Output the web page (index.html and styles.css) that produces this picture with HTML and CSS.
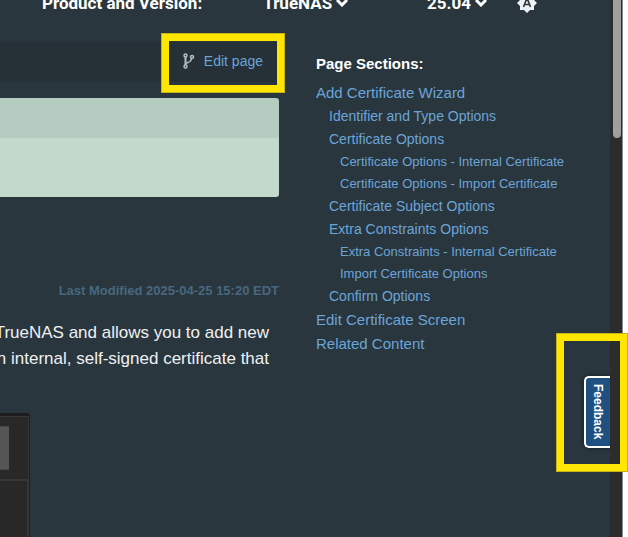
FILE: index.html
```html
<!DOCTYPE html>
<html lang="en">

<head>
  <meta charset="UTF-8">
  <meta name="viewport" content="width=device-width, initial-scale=1.0">
  <title>Certificates</title>
  <link rel="stylesheet" href="styles.css">
</head>

<body>
  <div class="page">
    <header class="topbar">
      <span class="label">Product and Version:</span>
      <button type="button" class="picker product">TrueNAS
        <svg class="chevron" viewBox="0 0 12 8"><path d="M1 1l5 5 5-5" /></svg>
      </button>
      <button type="button" class="picker version">25.04
        <svg class="chevron" viewBox="0 0 12 8"><path d="M1 1l5 5 5-5" /></svg>
      </button>
      <button type="button" class="theme" aria-label="Theme">
        <svg viewBox="0 0 20 20">
          <path fill="#eef1f5" d="M10 0l3 3h4v4l3 3-3 3v4h-4l-3 3-3-3H3v-4l-3-3 3-3V3h4z" />
          <path fill="none" stroke="#2a363e" stroke-width="1.600" d="M6.500 14L10 5l3.500 9M8 11.500h4" />
        </svg>
      </button>
    </header>
    <div class="columns">
      <main class="content">
        <div class="crumbs">
          <a href="#" class="edit">
            <svg class="branch" viewBox="0 0 12 16">
              <path class="stem" d="M2.500 4v8" />
              <path d="M2.500 11c1-2.500 5.500-.500 6-5.500" />
              <circle cx="2.500" cy="2.500" r="1.500" />
              <circle cx="9" cy="4" r="1.500" />
              <circle cx="2.500" cy="13.500" r="1.500" />
            </svg>
            Edit page
          </a>
          <div class="mark mark-edit"></div>
        </div>
        <div class="banner">
          <div class="banner-head"></div>
          <div class="banner-body"></div>
        </div>
        <p class="modified">Last Modified 2025-04-25 15:20 EDT</p>
        <p class="intro">TrueNAS and allows you to add new<br>n internal, self-signed certificate that</p>
        <div class="shot">
          <div class="shot-head">
            <div class="shot-btn"></div>
          </div>
          <div class="shot-body"></div>
        </div>
      </main>
      <nav class="toc">
        <h2>Page Sections:</h2>
        <ul>
          <li><a href="#">Add Certificate Wizard</a>
            <ul>
              <li><a href="#">Identifier and Type Options</a></li>
              <li><a href="#">Certificate Options</a>
                <ul>
                  <li><a href="#">Certificate Options - Internal Certificate</a></li>
                  <li><a href="#">Certificate Options - Import Certificate</a></li>
                </ul>
              </li>
              <li><a href="#">Certificate Subject Options</a></li>
              <li><a href="#">Extra Constraints Options</a>
                <ul>
                  <li><a href="#">Extra Constraints - Internal Certificate</a></li>
                  <li><a href="#">Import Certificate Options</a></li>
                </ul>
              </li>
              <li><a href="#">Confirm Options</a></li>
            </ul>
          </li>
          <li><a href="#">Edit Certificate Screen</a></li>
          <li><a href="#">Related Content</a></li>
        </ul>
      </nav>
    </div>
    <button type="button" class="feedback">Feedback</button>
  </div>
  <div class="scrollbar">
    <div class="thumb"></div>
  </div>
  <div class="mark mark-feedback"></div>
</body>

</html>
```
FILE: styles.css
```css
* {
  margin: 0;
  padding: 0;
  box-sizing: border-box;
}

body {
  display: flex;
  position: relative;
  height: 100vh;
  padding-right: 5px;
  overflow: hidden;
  background: #fff;
  font-family: "Liberation Sans", Arial, sans-serif;
  color: #fff;
}

a {
  color: #6aa5d8;
  text-decoration: none;
}

ul {
  list-style: none;
}

button {
  border: 0;
  background: none;
  color: inherit;
  font: inherit;
  cursor: pointer;
}

.page {
  flex: 1;
  position: relative;
  overflow: hidden;
  background: #2a363e;
}

/* top bar, scrolled half out of view */
.topbar {
  display: flex;
  align-items: center;
  height: 24px;
  margin-top: -9px;
  padding-left: 42px;
  font: bold 17px/24px Roboto, sans-serif;
  white-space: nowrap;
}

.picker {
  display: flex;
  align-items: center;
  gap: 4px;
}

.product {
  margin-left: 61px;
}

.version {
  margin-left: 79px;
}

.chevron {
  width: 12px;
  height: 8px;
  fill: none;
  stroke: #fff;
  stroke-width: 3;
}

.theme {
  margin-left: 30px;
  height: 20px;
}

.theme svg {
  display: block;
  width: 20px;
  height: 20px;
}

.columns {
  display: flex;
  gap: 37px;
  padding-top: 27px;
}

.content {
  flex: 0 1 279px;
}

.crumbs {
  position: relative;
  display: flex;
  justify-content: flex-end;
  height: 40px;
  padding-right: 16px;
  background: #253037;
}

.edit {
  display: flex;
  align-items: center;
  gap: 9px;
  height: 38px;
  font-size: 14px;
}

.branch {
  width: 12px;
  height: 16px;
  fill: none;
  stroke: #b4bcc4;
  stroke-width: 1.5;
}

.stem {
  stroke-width: 2;
}

.mark {
  position: absolute;
  border: 8px solid #ffe600;
  outline: 1px solid #c4b414;
  outline-offset: -1px;
}

.mark-edit {
  top: -9px;
  right: -6px;
  width: 124px;
  height: 60px;
}

.mark-feedback {
  top: 333px;
  right: 0;
  width: 72px;
  height: 139px;
}

.banner {
  margin-top: 16px;
  border-radius: 0 3px 3px 0;
  overflow: hidden;
}

.banner-head {
  height: 40px;
  background: #b4cbc0;
}

.banner-body {
  height: 59px;
  background: #c3d9cc;
}

.modified {
  margin-top: 84px;
  font-size: 13px;
  font-weight: bold;
  line-height: 20px;
  text-align: right;
  white-space: nowrap;
  color: #48687f;
}

.intro {
  margin: 19px 10px 0 -20px;
  font-size: 17px;
  line-height: 26px;
  text-align: right;
  white-space: nowrap;
  color: #eef1f3;
}

.shot {
  width: 30px;
  height: 160px;
  margin-top: 41px;
  border: solid #1e1e1f;
  border-width: 3px 1px 0 0;
  border-radius: 0 3px 0 0;
  background: #282828;
}

.shot-head {
  height: 65px;
  padding-top: 9px;
  border: solid #373737;
  border-width: 1px 1px 2px 0;
}

.shot-btn {
  width: 9px;
  height: 44px;
  border: solid #474747;
  border-width: 1px 0;
  background: #555;
}

.shot-body {
  height: 92px;
  border-right: 2px solid #373737;
}

.toc {
  flex: 1;
  padding-top: 12px;
  font-size: 15px;
  line-height: 24px;
  white-space: nowrap;
}

.toc h2 {
  margin-bottom: 7px;
  font-size: 15px;
  line-height: 20px;
}

.toc ul ul {
  padding-left: 13px;
  font-size: 14px;
  line-height: 23px;
}

.toc ul ul ul {
  padding-left: 11px;
  font-size: 13px;
  line-height: 22px;
}

.feedback {
  position: absolute;
  top: 376px;
  right: 0;
  width: 26px;
  height: 72px;
  border: 2px solid #fff;
  border-right: 0;
  border-radius: 5px 0 0 5px;
  background: #205081;
  box-shadow: 0 0 4px #111a20;
  font-size: 12px;
  font-weight: bold;
  writing-mode: vertical-rl;
}

.scrollbar {
  width: 13px;
  padding-left: 3px;
  border-right: 1px solid #8a8a8a;
  background: #2c2c2c;
}

.thumb {
  width: 8px;
  height: 138px;
  border-radius: 0 0 4px 4px;
  background: #9f9f9f;
}
```
